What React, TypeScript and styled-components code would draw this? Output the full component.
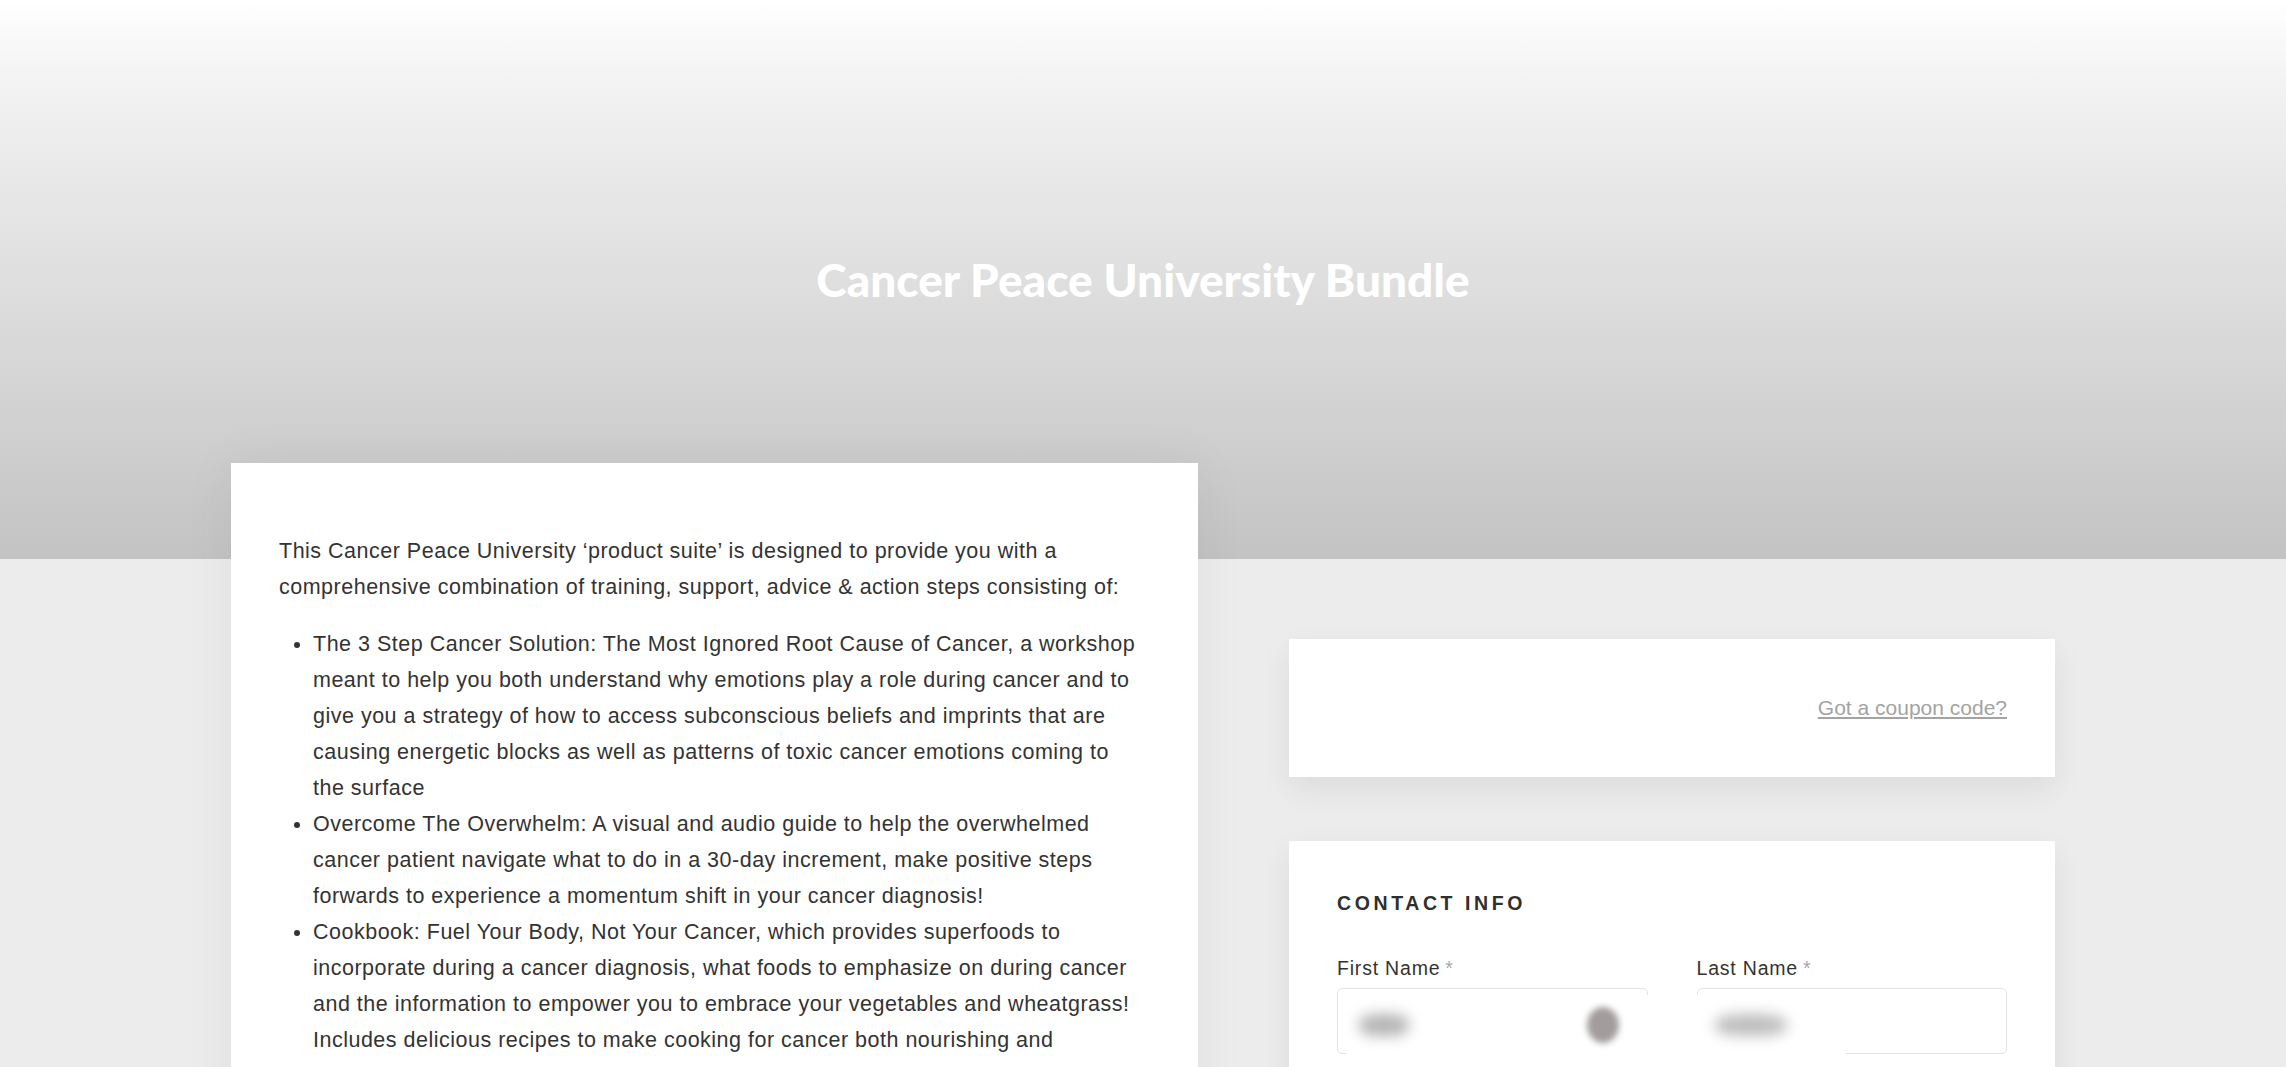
import React from "react";
import styled, { createGlobalStyle } from "styled-components";

const Global = createGlobalStyle`
  html, body { margin: 0; padding: 0; }
  body {
    background: #ececec;
    font-family: "Liberation Sans", Arial, Helvetica, sans-serif;
    color: #333;
    overflow: hidden;
  }
  * { box-sizing: border-box; }
`;

const Page = styled.div`
  width: 2286px;
  height: 1067px;
  overflow: hidden;
  background: #ececec;
`;

const Hero = styled.header`
  height: 559px;
  display: flex;
  align-items: center;
  justify-content: center;
  background: linear-gradient(
    180deg,
    #ffffff 0%,
    #f3f3f3 14%,
    #e5e5e5 38%,
    #d6d6d6 66%,
    #c3c3c3 100%
  );
`;

const Title = styled.h1`
  margin: 0;
  font-family: Lato, "Open Sans", sans-serif;
  font-weight: 900;
  font-size: 46px;
  letter-spacing: 0;
  color: #ffffff;
`;

const Main = styled.main`
  width: 1824px;
  margin: -96px auto 0;
  display: grid;
  grid-template-columns: 967px 766px;
  column-gap: 91px;
  align-items: start;
`;

const DescCard = styled.section`
  background: #fff;
  padding: 70px 58px 48px 48px;
  box-shadow: 0 0 50px rgba(0, 0, 0, 0.06);
  font-size: 21.5px;
  line-height: 36px;
  letter-spacing: 0.5px;
  color: #333;
`;

const Para = styled.p`
  margin: 0 0 21px;
`;

const List = styled.ul`
  margin: 0;
  padding-left: 34px;
`;

const Item = styled.li``;

const Side = styled.aside`
  padding-top: 176px;
  display: flex;
  flex-direction: column;
  gap: 64px;
`;

const Panel = styled.div`
  position: relative;
  background: #fff;
  padding: 48px;
  box-shadow: 0 12px 30px rgba(0, 0, 0, 0.07);
`;

const CouponPanel = styled(Panel)`
  height: 138px;
  display: flex;
  align-items: center;
  justify-content: flex-end;
  padding-top: 48px;
`;

const CouponLink = styled.a`
  font-size: 21px;
  color: #a3a3a3;
  text-decoration: underline;
  cursor: pointer;
`;

const Heading = styled.h2`
  margin: 0 0 36px;
  font-size: 19.5px;
  line-height: 28px;
  font-weight: 700;
  letter-spacing: 3.6px;
  color: #2f2f2f;
`;

const FieldGrid = styled.div`
  display: grid;
  grid-template-columns: 1fr 1fr;
  column-gap: 49px;
`;

const Field = styled.div`
  display: flex;
  flex-direction: column;
  gap: 5px;
`;

const Label = styled.label`
  font-size: 19.5px;
  line-height: 30px;
  letter-spacing: 0.8px;
  color: #333;
`;

const Req = styled.span`
  color: #a8a8a8;
  margin-left: 5px;
`;

const Input = styled.div`
  height: 66px;
  border: 1.5px solid #e3e3e3;
  border-radius: 5px;
  background: #fff;
`;

const Redact = styled.div`
  position: absolute;
  left: 58px;
  top: 154px;
  width: 498px;
  height: 59px;
  background: #fff;
  display: flex;
  align-items: center;
`;

const Blob = styled.div<{ $w: number; $h: number; $ml: number; $c: string; $blur: number; $round?: boolean }>`
  flex: none;
  width: ${(p) => p.$w}px;
  height: ${(p) => p.$h}px;
  margin-left: ${(p) => p.$ml}px;
  background: ${(p) => p.$c};
  border-radius: ${(p) => (p.$round ? "50%" : "40%")};
  filter: blur(${(p) => p.$blur}px);
`;

export default function App() {
  return (
    <Page>
      <Global />
      <Hero>
        <Title>Cancer Peace University Bundle</Title>
      </Hero>
      <Main>
        <DescCard>
          <Para>
            This Cancer Peace University ‘product suite’ is designed to provide you with a
            comprehensive combination of training, support, advice &amp; action steps consisting of:
          </Para>
          <List>
            <Item>
              The 3 Step Cancer Solution: The Most Ignored Root Cause of Cancer, a workshop meant to
              help you both understand why emotions play a role during cancer and to give you a
              strategy of how to access subconscious beliefs and imprints that are causing energetic
              blocks as well as patterns of toxic cancer emotions coming to the surface
            </Item>
            <Item>
              Overcome The Overwhelm: A visual and audio guide to help the overwhelmed cancer patient
              navigate what to do in a 30-day increment, make positive steps forwards to experience a
              momentum shift in your cancer diagnosis!
            </Item>
            <Item>
              Cookbook: Fuel Your Body, Not Your Cancer, which provides superfoods to incorporate
              during a cancer diagnosis, what foods to emphasize on during cancer and the information
              to empower you to embrace your vegetables and wheatgrass! Includes delicious recipes to
              make cooking for cancer both nourishing and enjoyable!
            </Item>
          </List>
        </DescCard>
        <Side>
          <CouponPanel>
            <CouponLink>Got a coupon code?</CouponLink>
          </CouponPanel>
          <Panel>
            <Heading>CONTACT INFO</Heading>
            <FieldGrid>
              <Field>
                <Label>
                  First Name<Req>*</Req>
                </Label>
                <Input />
              </Field>
              <Field>
                <Label>
                  Last Name<Req>*</Req>
                </Label>
                <Input />
              </Field>
            </FieldGrid>
            <Redact>
              <Blob $w={50} $h={22} $ml={12} $c="#b4b4b4" $blur={7} />
              <Blob $w={32} $h={36} $ml={178} $c="#a39c9c" $blur={3} $round />
              <Blob $w={72} $h={22} $ml={96} $c="#bdbdbd" $blur={7} />
            </Redact>
          </Panel>
        </Side>
      </Main>
    </Page>
  );
}
